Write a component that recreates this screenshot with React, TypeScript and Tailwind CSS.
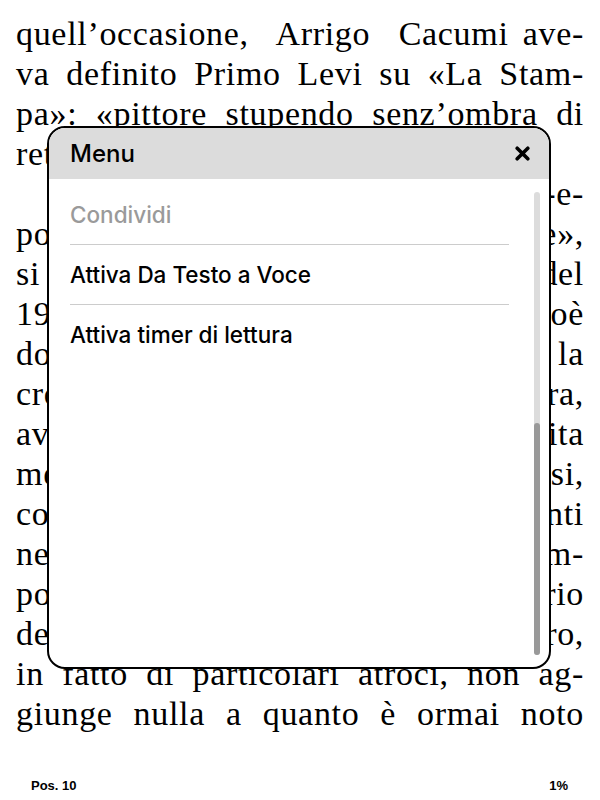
import React from "react";

const serif = { fontFamily: '"Liberation Serif", "Times New Roman", serif' };

const lines: { text: string; kind?: "last" | "indent" }[] = [
  { text: "quell’occasione,  Arrigo  Cacumi ave-" },
  { text: "va definito Primo Levi su «La Stam-" },
  { text: "pa»: «pittore stupendo senz’ombra di" },
  { text: "retorica».", kind: "last" },
  { text: "Il giudizio suonava insolito nel-e-", kind: "indent" },
  { text: "poca che chiedeva «testimonianze»," },
  { text: "si attendeva documenti. Nell’aprile del" },
  { text: "1947, infatti, il tema dei Lager, cioè" },
  { text: "dopo le prime testimonianze, la" },
  { text: "cronaca più che la letteratura," },
  { text: "aveva già una sua forma definita" },
  { text: "memorie e diari erano già diffusi," },
  { text: "come tanti altri documenti" },
  { text: "nei quali l’orrore si faceva im-" },
  { text: "ponente e, in certo senso, ordinario" },
  { text: "del lettore. Eppure il suo lavoro," },
  { text: "in fatto di particolari atroci, non ag-" },
  { text: "giunge nulla a quanto è ormai noto" },
];

const menuItems = [
  { label: "Condividi", disabled: true },
  { label: "Attiva Da Testo a Voce" },
  { label: "Attiva timer di lettura" },
];

function CloseIcon() {
  return (
    <svg width="15" height="15" viewBox="0 0 15 15" fill="none">
      <path d="M2.2 2.2 L12.8 12.8 M12.8 2.2 L2.2 12.8" stroke="#000" strokeWidth="3.6" strokeLinecap="round" />
    </svg>
  );
}

function MenuModal() {
  return (
    <div
      className="absolute left-[47px] top-[126px] w-[504px] h-[543px] border-2 border-black rounded-[18px] bg-white overflow-hidden flex flex-col"
      style={{ fontFamily: 'Inter, "Noto Sans", sans-serif' }}
    >
      <div className="h-[51px] shrink-0 bg-[#dcdcdc] flex items-center justify-between pl-[21px] pr-[19px]">
        <span className="text-[24px] font-medium text-black">Menu</span>
        <CloseIcon />
      </div>
      <div className="flex-1 flex">
        <div className="flex-1 pl-[21px] pr-[25px] pt-[6px]">
          {menuItems.map((item, i) => (
            <div
              key={item.label}
              className={
                "h-[60px] flex items-center text-[22.5px] font-medium " +
                (i < menuItems.length - 1 ? "border-b border-[#cccccc] " : "") +
                (item.disabled ? "text-[#9a9a9a]" : "text-black")
              }
            >
              {item.label}
            </div>
          ))}
        </div>
        <div className="w-[6px] mt-[13px] mb-[12px] mr-[9px] rounded-full bg-[#dcdcdc] flex flex-col justify-end">
          <div className="h-[232px] rounded-full bg-[#999999]" />
        </div>
      </div>
    </div>
  );
}

export default function App() {
  return (
    <div className="relative w-[600px] h-[800px] bg-white overflow-hidden flex flex-col text-black">
      <div className="px-4 pt-[14px] text-[34px] leading-[40px] tracking-[0.02em]" style={serif}>
        {lines.map((l, i) => (
          <div
            key={i}
            className={
              l.kind === "last"
                ? "whitespace-pre text-left"
                : l.kind === "indent"
                ? "whitespace-pre indent-[2em] text-justify [text-align-last:justify]"
                : "whitespace-pre-wrap text-justify [text-align-last:justify]"
            }
          >
            {l.text}
          </div>
        ))}
      </div>
      <div
        className="mt-auto pb-[6px] pl-[31px] pr-[32px] flex justify-between text-[13px] leading-[16px] font-bold"
        style={{ fontFamily: '"Liberation Sans", Arial, sans-serif' }}
      >
        <span>Pos. 10</span>
        <span>1%</span>
      </div>
      <MenuModal />
    </div>
  );
}
